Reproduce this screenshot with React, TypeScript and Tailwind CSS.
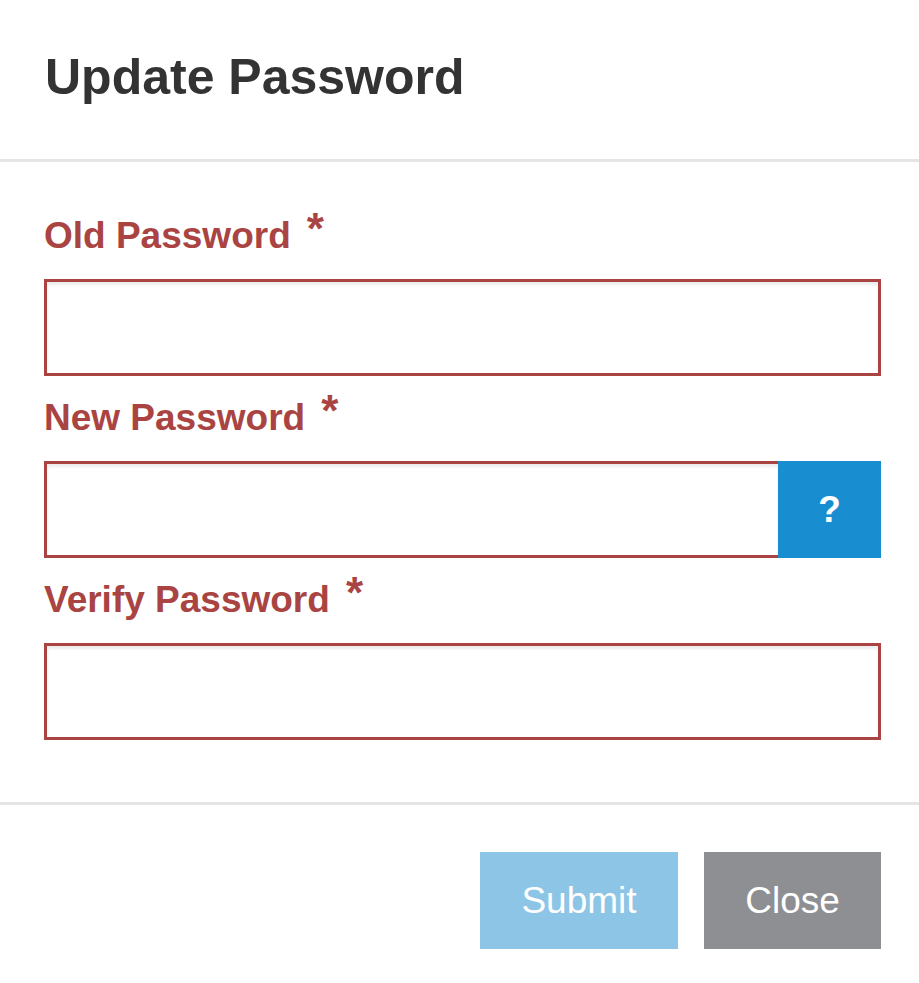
import React from "react";

const Field: React.FC<{ label: string; help?: boolean; last?: boolean }> = ({
  label,
  help,
  last,
}) => {
  return (
    <div className={last ? "" : "mb-[23px]"}>
      <label className="block h-[37px] mb-[25px] text-[37px] leading-[37px] font-bold text-[#a94442] whitespace-nowrap">
        {label}
        <span className="relative top-[-4px] ml-[16px] text-[44px] leading-[0]">*</span>
      </label>
      <div className="flex h-[97px]">
        <input
          type="password"
          className={
            help
              ? "flex-1 min-w-0 h-full border-[3px] border-r-0 border-[#a94442] bg-white shadow-[inset_0_3px_3px_rgba(0,0,0,0.075)] outline-none px-4 text-[37px]"
              : "flex-1 min-w-0 h-full border-[3px] border-[#a94442] bg-white shadow-[inset_0_3px_3px_rgba(0,0,0,0.075)] outline-none px-4 text-[37px]"
          }
        />
        {help && (
          <button
            type="button"
            className="w-[103px] h-full bg-[#188dd0] text-white text-[37px] font-bold flex items-center justify-center"
          >
            ?
          </button>
        )}
      </div>
    </div>
  );
};

const App: React.FC = () => {
  return (
    <div className="w-[919px] h-[983px] bg-white font-['Liberation_Sans',Arial,sans-serif]">
      <div className="h-[162px] border-b-[3px] border-[#e5e5e5] px-[45px] pt-[52px]">
        <h4 className="text-[50px] leading-[50px] font-bold text-[#333333] whitespace-nowrap">
          Update Password
        </h4>
      </div>
      <form className="pl-[44px] pr-[38px] pt-[55px] pb-[62px]">
        <Field label="Old Password" />
        <Field label="New Password" help />
        <Field label="Verify Password" last />
      </form>
      <div className="border-t-[3px] border-[#e5e5e5] pt-[47px] pr-[38px] flex justify-end gap-[26px]">
        <button
          type="button"
          className="w-[198px] h-[97px] bg-[#8dc5e6] text-white text-[37px]"
        >
          Submit
        </button>
        <button
          type="button"
          className="w-[177px] h-[97px] bg-[#8e8f93] text-white text-[37px]"
        >
          Close
        </button>
      </div>
    </div>
  );
};

export default App;
